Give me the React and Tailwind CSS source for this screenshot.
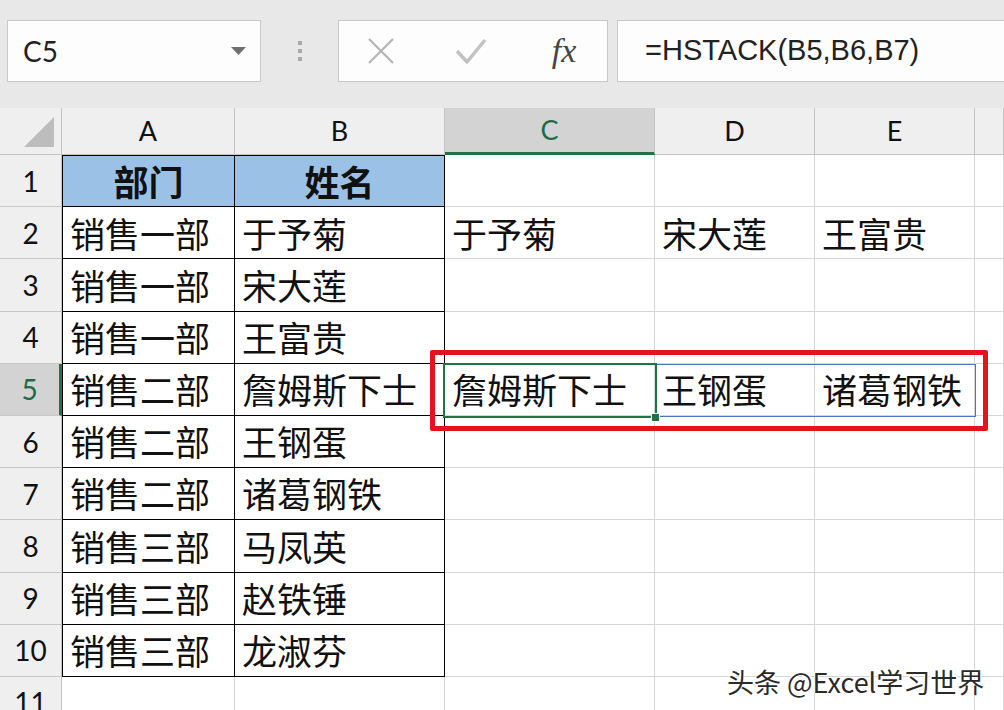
import React from 'react';

const colA = ['部门', '销售一部', '销售一部', '销售一部', '销售二部', '销售二部', '销售二部', '销售三部', '销售三部', '销售三部'];
const colB = ['姓名', '于予菊', '宋大莲', '王富贵', '詹姆斯下士', '王钢蛋', '诸葛钢铁', '马凤英', '赵铁锤', '龙淑芬'];
const spill = {
  2: ['于予菊', '宋大莲', '王富贵'],
  5: ['詹姆斯下士', '王钢蛋', '诸葛钢铁'],
};

const cjk = { fontFamily: '"Noto Sans CJK SC", sans-serif' };
const latin = { fontFamily: 'Lato, "Liberation Sans", sans-serif' };

const Toolbar = () => (
  <div className="flex h-[108px] items-start bg-[#e8e8e8] pt-[20px]">
    {/* name box */}
    <div className="ml-[7px] flex h-[62px] w-[254px] items-center justify-between border border-[#c8c8c8] bg-[#fdfdfd] pl-[15px] pr-[14px]">
      <span className="text-[28px] text-[#222]" style={latin}>C5</span>
      <svg width="15" height="9" viewBox="0 0 15 9">
        <path d="M0 0h15L7.5 8z" fill="#6f6f6f" />
      </svg>
    </div>
    <div className="flex h-[62px] w-[77px] items-center justify-center">
      <div className="flex flex-col gap-[4px]">
        <span className="block h-[4px] w-[4px] bg-[#a9a9a9]" />
        <span className="block h-[4px] w-[4px] bg-[#a9a9a9]" />
        <span className="block h-[4px] w-[4px] bg-[#a9a9a9]" />
      </div>
    </div>
    {/* cancel / enter / fx */}
    <div className="grid h-[62px] w-[270px] grid-cols-[84px_96px_90px] items-center border border-[#c8c8c8] bg-[#fdfdfd]">
      <div className="flex justify-center">
        <svg width="30" height="28" viewBox="0 0 30 28">
          <path d="M3 2 L27 26 M27 2 L3 26" stroke="#b4b4b4" strokeWidth="2.2" fill="none" />
        </svg>
      </div>
      <div className="flex justify-center">
        <svg width="32" height="28" viewBox="0 0 32 28">
          <path d="M2 14 L12 25 L30 3" stroke="#c2c2c2" strokeWidth="3.5" fill="none" strokeLinejoin="round" />
        </svg>
      </div>
      <div className="flex justify-center">
        <span className="text-[34px] italic leading-none text-[#454545]" style={{ fontFamily: '"Liberation Serif", serif' }}>
          fx
        </span>
      </div>
    </div>
    {/* formula bar */}
    <div className="-mr-4 ml-[9px] flex h-[62px] flex-1 items-center border border-[#c8c8c8] bg-[#fdfdfd] pl-[27px]">
      <span className="text-[29px] text-[#222]" style={{ fontFamily: '"Liberation Sans", sans-serif' }}>
        =HSTACK(B5,B6,B7)
      </span>
    </div>
  </div>
);

const ColHeader = ({ label, selected }) => (
  <div
    className={`flex items-center justify-center border-r border-[#c4c4c4] text-[27px] ${
      selected
        ? 'border-b-[3px] border-b-[#217346] bg-[#d3d3d3] text-[#1e6b47]'
        : 'border-b border-b-[#c4c4c4] bg-[#efefef] text-[#111]'
    }`}
    style={latin}
  >
    {label}
  </div>
);

const RowHeader = ({ n, selected }) => (
  <div
    className={`flex items-center justify-center border-b border-[#c8c8c8] text-[28px] ${
      selected
        ? 'border-r-[3px] border-r-[#217346] bg-[#d3d3d3] text-[#1e6b47]'
        : 'border-r border-r-[#c4c4c4] bg-[#efefef] text-[#111]'
    }`}
    style={latin}
  >
    {n}
  </div>
);

const Cell = ({ children, table, header, first, top }) => (
  <div
    className={`flex items-center overflow-hidden whitespace-nowrap border-r border-b text-[35px] ${
      table ? 'border-black' : 'border-[#d6d6d6]'
    } ${first ? 'border-l border-l-black' : ''} ${top ? 'border-t border-t-black' : ''} ${
      header ? 'justify-center bg-[#9bc2e6] font-bold' : 'bg-white pl-[7px]'
    } text-[#111]`}
    style={cjk}
  >
    {children}
  </div>
);

export default function App() {
  const rows = Array.from({ length: 11 }, (_, i) => i + 1);

  return (
    <div className="relative h-[710px] w-[1004px] overflow-hidden bg-white">
      <Toolbar />
      <div className="relative">
        <div className="grid grid-cols-[62px_173px_210px_210px_160px_160px_1fr] grid-rows-[47px_repeat(11,52.2px)]">
          {/* corner */}
          <div className="flex items-end justify-end border-r border-b border-[#c4c4c4] bg-[#efefef] pb-[7px] pr-[7px]">
            <svg width="30" height="30" viewBox="0 0 30 30">
              <path d="M30 0V30H0z" fill="#bdbdbd" />
            </svg>
          </div>
          {['A', 'B', 'C', 'D', 'E', ''].map((c) => (
            <ColHeader key={c || 'F'} label={c} selected={c === 'C'} />
          ))}

          {rows.map((r) => {
            const inTable = r <= 10;
            const s = spill[r] || ['', '', ''];
            return (
              <React.Fragment key={r}>
                <RowHeader n={r} selected={r === 5} />
                <Cell table={inTable} header={r === 1} first={inTable} top={r === 1}>
                  {inTable ? colA[r - 1] : ''}
                </Cell>
                <Cell table={inTable} header={r === 1} top={r === 1}>
                  {inTable ? colB[r - 1] : ''}
                </Cell>
                <Cell>{s[0]}</Cell>
                <Cell>{s[1]}</Cell>
                <Cell>{s[2]}</Cell>
                <Cell />
              </React.Fragment>
            );
          })}
        </div>

        {/* spill range outline */}
        <div className="pointer-events-none absolute left-[444px] top-[256px] h-[53px] w-[532px] border-[1.5px] border-[#4f73b8]" />
        {/* active cell C5 */}
        <div className="pointer-events-none absolute left-[443px] top-[255px] h-[55px] w-[214px] border-[2.5px] border-[#217346]" />
        <div className="pointer-events-none absolute left-[651px] top-[305px] h-[9px] w-[9px] border border-white bg-[#217346]" />
        {/* red highlight */}
        <div className="pointer-events-none absolute left-[430px] top-[242px] h-[81px] w-[558px] rounded-[2px] border-[5px] border-[#e3141d]" />
      </div>

      {/* watermark */}
      <div
        className="pointer-events-none absolute left-[727px] top-[662px] text-[27px] text-[#2a2a2a]"
        style={{
          ...cjk,
          textShadow: '1px 1px 0 #fff, -1px -1px 0 #fff, 1px -1px 0 #fff, -1px 1px 0 #fff',
        }}
      >
        头条 @Excel学习世界
      </div>
    </div>
  );
}
